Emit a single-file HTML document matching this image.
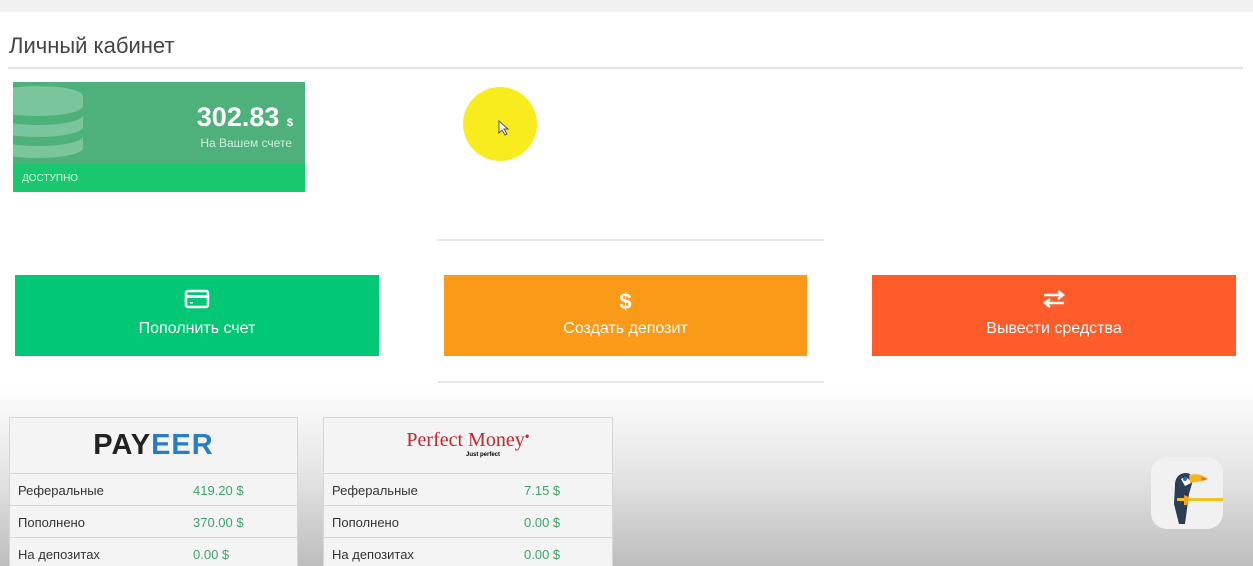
<!DOCTYPE html>
<html><head><meta charset="utf-8"><style>
*{margin:0;padding:0;box-sizing:border-box}
html,body{width:1253px;height:566px;overflow:hidden}
body{position:relative;font-family:"Liberation Sans","DejaVu Sans",sans-serif;background:linear-gradient(#fff 0,#fff 385px,#e6e6e6 470px,#bdbdbd 566px)}
.top{position:absolute;left:0;top:0;width:1253px;height:12px;background:#f1f1f1}
h1{position:absolute;left:9px;top:33px;font-weight:normal;font-size:22px;color:#444}
.line{position:absolute;left:8px;top:67px;width:1235px;height:2px;background:#e2e2e2}
.card{position:absolute;left:13px;top:82px;width:292px;height:110px;background:#4eb07a;overflow:hidden}
.card .bot{position:absolute;left:0;bottom:0;width:100%;height:28px;background:#19c86e;color:#d8f5e4;font-size:10px;padding:9px 0 0 9px}
.amt{position:absolute;right:12px;top:20px;color:#fff;font-weight:bold;font-size:27px}
.amt small{font-size:11px}
.sub{position:absolute;right:13px;top:54px;color:#cfeedd;font-size:12px}
.btn{position:absolute;top:275px;height:81px;width:364px;color:#fff;text-align:center;font-size:16px;padding-top:45px}
.ic{position:absolute;left:0;width:100%;top:14px;font-weight:bold;font-size:22px}
.hr{position:absolute;left:438px;width:386px;height:2px;background:#e6e6e6}
.tb{position:absolute;top:417px;width:289px;height:149px;border:1px solid #d6d6d6;border-bottom:none;background:#f4f4f4;overflow:hidden}
.hd{height:56px;border-bottom:1px solid #d6d6d6;text-align:center}
.row{height:32px;border-bottom:1px solid #d6d6d6;font-size:13px;color:#333;position:relative;padding:9px 0 0 8px}
.row span{position:absolute;left:183px;top:9px;color:#3aa56a}
.yc{position:absolute;left:463px;top:87px;width:74px;height:74px;border-radius:50%;background:#f8ec1e}
.bird{position:absolute;left:1151px;top:457px;width:72px;height:72px;border-radius:16px;background:#f1f1f1}
</style></head><body>
<div class="top"></div>
<h1>Личный кабинет</h1>
<div class="line"></div>
<div class="card">
<svg style="position:absolute;left:0;top:0" width="80" height="82" viewBox="0 0 80 82"><g fill="#7ac59c">
<path d="M-20 14a45 10 0 0 1 90 0v10a45 10 0 0 1-90 0z"/>
<path d="M-20 33a45 10 0 0 0 90 0v12a45 10 0 0 1-90 0z"/>
<path d="M-20 54a45 10 0 0 0 90 0v12a45 10 0 0 1-90 0z"/>
</g></svg>
<div class="amt">302.83 <small>$</small></div>
<div class="sub">На Вашем счете</div>
<div class="bot">ДОСТУПНО</div>
</div>
<div class="yc"><svg width="74" height="74"><path d="M36 34 L36 46 L39 43 L42 48 L44 47 L41 42 L45 42 Z" fill="#fff" stroke="#555" stroke-width="1"/></svg></div>
<div class="hr" style="top:239px"></div>
<div class="hr" style="top:381px"></div>
<div class="btn" style="left:15px;background:#02c875"><div class="ic"><svg width="26" height="20" viewBox="0 0 26 20"><rect x="2" y="2" width="22" height="16" rx="2" fill="none" stroke="#fff" stroke-width="2.5"/><rect x="2" y="6" width="22" height="3" fill="#fff"/><rect x="6" y="13" width="3" height="1.5" fill="#fff"/></svg></div>Пополнить счет</div>
<div class="btn" style="left:444px;width:363px;background:#f99a18"><div class="ic">$</div>Создать депозит</div>
<div class="btn" style="left:872px;background:#fe5d2b"><div class="ic"><svg width="26" height="20" viewBox="0 0 26 20"><path d="M3 6H21M17 2l5 4-5 4M23 14H5M9 10l-5 4 5 4" fill="none" stroke="#fff" stroke-width="2.5"/></svg></div>Вывести средства</div>
<div class="tb" style="left:9px">
<div class="hd"><div style="font-weight:bold;font-size:29px;padding-top:11px;color:#222;letter-spacing:1px">PAY<span style="color:#2a7cc4">EER</span></div></div>
<div class="row">Реферальные<span>419.20 $</span></div>
<div class="row">Пополнено<span>370.00 $</span></div>
<div class="row">На депозитах<span>0.00 $</span></div>
</div>
<div class="tb" style="left:323px;width:290px">
<div class="hd"><div style="font-family:'Liberation Serif',serif;font-size:20px;color:#c0262c;padding-top:11px">Perfect Money<sup style="font-size:8px">●</sup></div><div style="font-size:6px;font-weight:bold;margin-left:30px">Just perfect</div></div>
<div class="row">Реферальные<span style="left:200px">7.15 $</span></div>
<div class="row">Пополнено<span style="left:200px">0.00 $</span></div>
<div class="row">На депозитах<span style="left:200px">0.00 $</span></div>
</div>
<div class="bird"><svg width="72" height="72" viewBox="0 0 72 72"><path d="M24 28c0-8 5-12 11-12 4 0 7 3 7 7l-4 14-4 30h-6l-5-20z" fill="#2c3e55"/><path d="M30 22c3-2 8-2 10 4l-6 3z" fill="#fff"/><path d="M38 18c8-2 14 0 19 4-6 2-12 3-18 4z" fill="#f5b51e"/><path d="M50 20l7 2-6 2z" fill="#f07020"/><circle cx="34" cy="22" r="2" fill="#2a6cc0"/><rect x="26" y="41" width="46" height="3" fill="#f1c21b"/><path d="M33 38l5 2-2 8h-3z" fill="#f5a31e"/></svg></div>
</body></html>
